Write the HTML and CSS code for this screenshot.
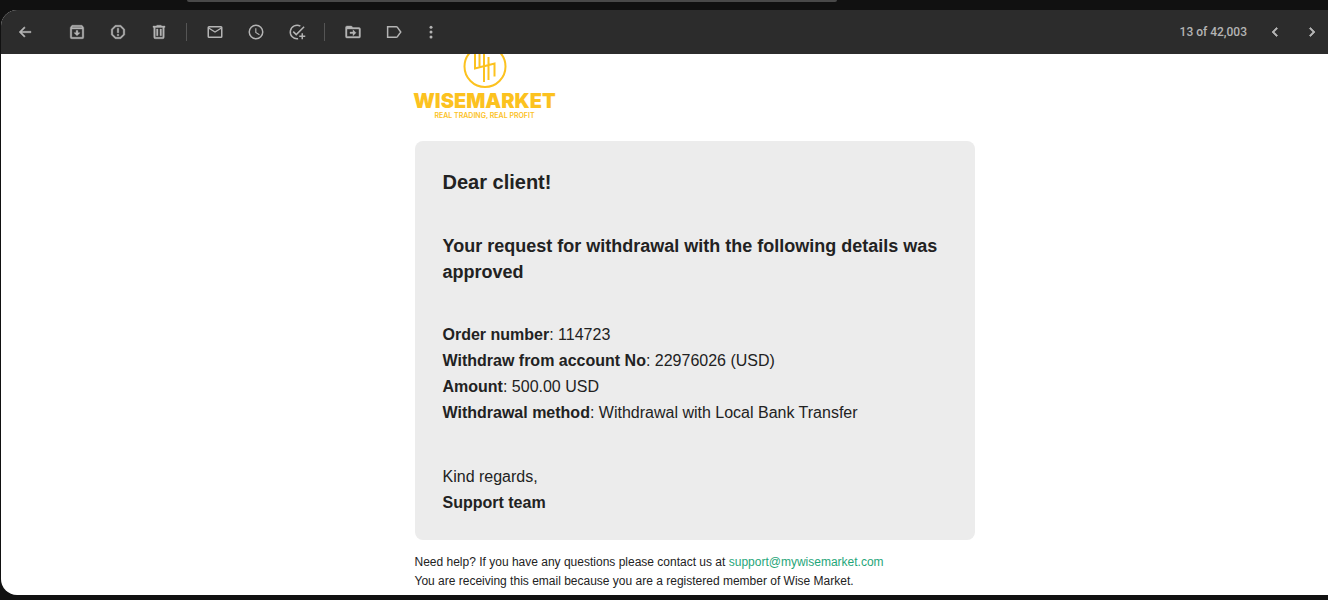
FILE: index.html
```html
<!DOCTYPE html>
<html lang="en">
<head>
<meta charset="utf-8">
<meta name="viewport" content="width=device-width, initial-scale=1">
<title>Withdrawal approved</title>
<link rel="stylesheet" href="styles.css">
</head>
<body>
<div class="topstrip"><div class="searchbar"></div></div>
<main class="panel">
  <header class="toolbar">
    <button class="tool back" aria-label="Back"><svg viewBox="0 0 24 24"><path d="M20 11H7.830l4.600-4.600L11 5l-7 7 7 7 1.400-1.400L7.830 13H20z" stroke="currentColor" stroke-width=".5"/></svg></button>
    <button class="tool" aria-label="Archive"><svg viewBox="0 0 24 24"><path d="M20.500 5.200 19 3.400C18.800 3.100 18.400 3 18 3H6c-.4 0-.8.100-1 .400L3.500 5.200C3.200 5.600 3 6 3 6.500V19a2 2 0 0 0 2 2h14a2 2 0 0 0 2-2V6.500c0-.500-.2-.900-.5-1.300zM6.200 5h11.600l.8 1H5.400zM5 19V8h14v11zM13.200 10v3H16l-4 4-4-4h2.800v-3z" stroke="currentColor" stroke-width=".5"/></svg></button>
    <button class="tool" aria-label="Report spam"><svg viewBox="0 0 24 24"><path d="M15.700 3H8.300L3 8.300v7.400L8.300 21h7.400l5.300-5.300V8.300zM19 14.900 14.900 19H9.100L5 14.900V9.100L9.100 5h5.800L19 9.100zM11 7h2v6h-2zM11 15h2v2h-2z" stroke="currentColor" stroke-width=".5"/></svg></button>
    <button class="tool" aria-label="Delete"><svg viewBox="0 0 24 24"><path d="M15 4V3H9v1H4v2h1v13a2 2 0 0 0 2 2h10a2 2 0 0 0 2-2V6h1V4zm2 15H7V6h10zM8.700 8h2v9h-2zM13.300 8h2v9h-2z" stroke="currentColor" stroke-width=".5"/></svg></button>
    <span class="divider"></span>
    <button class="tool" aria-label="Mark as unread"><svg viewBox="0 0 24 24"><path d="M20 4H4a2 2 0 0 0-2 2v12a2 2 0 0 0 2 2h16a2 2 0 0 0 2-2V6a2 2 0 0 0-2-2zm0 14H4V8l8 5 8-5zm-8-7L4 6h16z"/></svg></button>
    <button class="tool" aria-label="Snooze"><svg viewBox="0 0 24 24"><path d="M12 2a10 10 0 1 0 0 20 10 10 0 0 0 0-20zm0 18a8 8 0 1 1 0-16 8 8 0 0 1 0 16zm.5-13H11v6l5.200 3.200.8-1.300-4.500-2.700z"/></svg></button>
    <button class="tool" aria-label="Add to tasks"><svg class="outline" viewBox="0 0 24 24"><path d="M16.500 4.200A9 9 0 1 0 13.500 20.900M7 11.500l4 4L21.500 5M19 13.500v8M15 17.500h8"/></svg></button>
    <span class="divider"></span>
    <button class="tool" aria-label="Move to"><svg viewBox="0 0 24 24"><path d="M20 6h-8l-2-2H4a2 2 0 0 0-2 2v12a2 2 0 0 0 2 2h16a2 2 0 0 0 2-2V8a2 2 0 0 0-2-2zm0 12H4V8h16zM12 17l4-4-4-4v3H8v2h4z" stroke="currentColor" stroke-width=".5"/></svg></button>
    <button class="tool label" aria-label="Labels"><svg class="outline" viewBox="0 0 24 24"><path d="M3.500 5H15a2 2 0 0 1 1.600.8L21 12l-4.400 6.200A2 2 0 0 1 15 19H3.500z"/></svg></button>
    <button class="tool" aria-label="More"><svg viewBox="0 0 24 24"><circle cx="12" cy="5.500" r="2"/><circle cx="12" cy="12" r="2"/><circle cx="12" cy="18.500" r="2"/></svg></button>
    <span class="count">13 of 42,003</span>
    <button class="tool newer" aria-label="Newer"><svg viewBox="0 0 24 24"><path d="M15.400 7.400 14 6l-6 6 6 6 1.400-1.400L10.800 12z" stroke="currentColor"/></svg></button>
    <button class="tool" aria-label="Older"><svg viewBox="0 0 24 24"><path d="M8.600 16.600 10 18l6-6-6-6-1.400 1.400 4.600 4.600z" stroke="currentColor"/></svg></button>
  </header>
  <article class="mail">
    <div class="brand">
      <svg class="emblem" viewBox="0 0 44 35" aria-hidden="true"><circle cx="22" cy="12.500" r="20.500"/><path d="M12 0v14.500l8.500-2.200M16.500 0v13M21 0v28M25.500 3v23M21 12.300 31.500 9.500v13"/></svg>
      <div class="wordmark">WISEMARKET</div>
      <div class="tagline">REAL TRADING, REAL PROFIT</div>
    </div>
    <section class="card">
      <h1>Dear client!</h1>
      <h2>Your request for withdrawal with the following details was approved</h2>
      <p><b>Order number</b>: 114723<br><b>Withdraw from account No</b>: 22976026 (USD)<br><b>Amount</b>: 500.00 USD<br><b>Withdrawal method</b>: Withdrawal with Local Bank Transfer</p>
      <p>Kind regards,<br><b>Support team</b></p>
    </section>
    <footer class="note">Need help? If you have any questions please contact us at <a href="mailto:support@mywisemarket.com">support@mywisemarket.com</a><br>You are receiving this email because you are a registered member of Wise Market.</footer>
  </article>
</main>
</body>
</html>
```
FILE: styles.css
```css
* { box-sizing: border-box; }
body {
  margin: 0;
  min-height: 100vh;
  padding: 0 0 5px 1px;
  display: flex;
  flex-direction: column;
  background: #111;
  color: #222;
  font-family: "Liberation Sans", Arial, sans-serif;
}
.topstrip { height: 10px; padding: 0 37% 0 14%; }
.searchbar { height: 2px; background: #494949; border-radius: 0 0 8px 8px; }
.panel {
  flex: 1;
  display: flex;
  flex-direction: column;
  background: #fff;
  border-radius: 16px 0 0 16px;
  overflow: hidden;
}
.toolbar {
  display: flex;
  align-items: center;
  height: 44px;
  padding: 0 6px 0 14px;
  background: #2c2c2c;
  color: #b4b4b4;
}
.tool {
  display: flex;
  flex: none;
  width: 20px;
  height: 20px;
  margin-right: 21px;
  padding: 1px;
  border: 0;
  background: none;
  color: inherit;
}
.tool:last-child { margin-right: 0; }
.tool svg { width: 18px; height: 18px; fill: currentColor; }
.tool .outline { fill: none; stroke: currentColor; stroke-width: 2; }
.back { margin-right: 32px; }
.label { margin-right: 17px; }
.newer { margin-right: 17px; }
.divider { width: 1px; height: 18px; margin: 0 18px 0 -4px; background: #555; }
.count {
  margin-left: auto;
  margin-right: 18px;
  font: 500 12px Roboto, sans-serif;
}
.mail { width: 100%; max-width: 620px; margin: 0 auto; padding-left: 60px; }
.brand {
  display: flex;
  flex-direction: column;
  align-items: center;
  width: 140px;
  color: #fcc21f;
  font-family: Inter, sans-serif;
  white-space: nowrap;
}
.emblem { width: 44px; height: 35px; fill: none; stroke: currentColor; stroke-width: 2; }
.wordmark { font-size: 20px; line-height: 24px; font-weight: 900; }
.tagline { font-size: 7px; line-height: 6px; font-weight: 600; }
.card {
  margin-top: 22px;
  padding: 28px 28px 24px;
  background: #ececec;
  border-radius: 8px;
  font-size: 16px;
  line-height: 26px;
}
.card h1 { margin: 0 0 38px; font-size: 20px; line-height: 26px; }
.card h2 { margin: 0 0 37px; font-size: 18px; line-height: 26px; }
.card p { margin: 0 0 38px; }
.card p:last-child { margin: 0; }
.note { padding-top: 13px; font-size: 12px; line-height: 19px; }
.note a { color: #1fa67a; text-decoration: none; }
```
